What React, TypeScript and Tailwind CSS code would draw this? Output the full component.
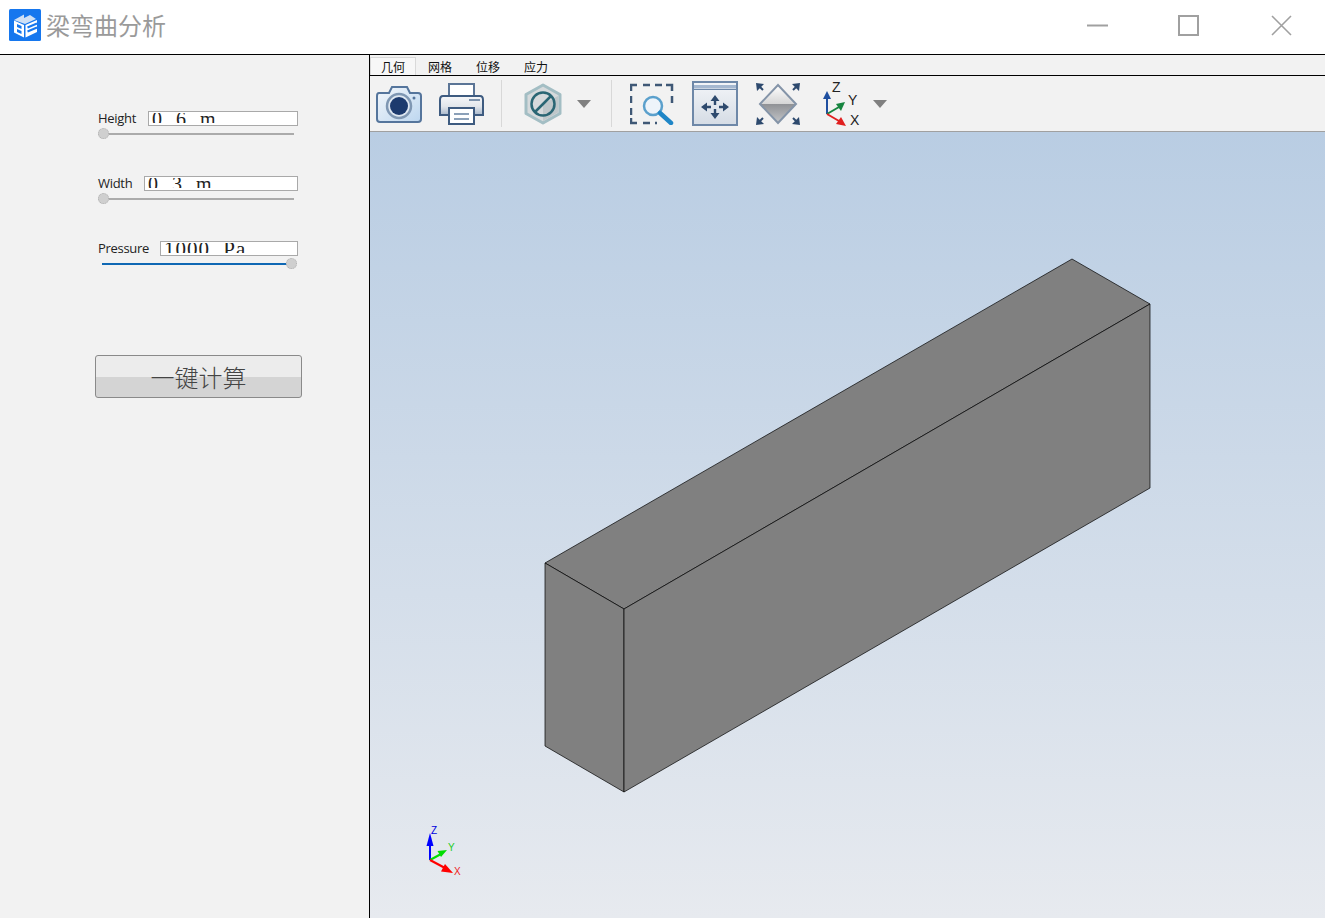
import React from "react";

const CJK = "font-['Noto_Sans_CJK_SC','Noto_Sans',sans-serif]";

function Logo() {
  return (
    <svg width="32" height="32" viewBox="0 0 32 32" className="shrink-0">
      <rect width="32" height="32" rx="1.5" fill="#1677ee" />
      <path d="M5 11 L15 5.5 L15 9 L21 6 L27 10 L16 15 Z" fill="#cfe0f5" />
      <path d="M5 11.5 L15 16 L15 28.5 L5 23.5 Z" fill="#ffffff" />
      <path d="M16.5 16 L28 11 L28 23 L16.5 28.5 Z" fill="#ffffff" />
      <path d="M8 15 L12.5 17 L12.5 20 L8 18 Z M8 20 L12.5 22 L12.5 25 L8 23 Z" fill="#1677ee" />
      <path d="M18.5 18.5 L28 14.5 M18.5 22.5 L28 18.5" stroke="#1677ee" strokeWidth="2" />
    </svg>
  );
}

function WindowButtons() {
  return (
    <div className="flex items-center gap-[70px] mr-[33px]">
      <svg width="21" height="21" viewBox="0 0 21 21">
        <path d="M0 10.5H21" stroke="#a0a0a0" strokeWidth="2" />
      </svg>
      <svg width="21" height="21" viewBox="0 0 21 21">
        <rect x="1" y="1" width="19" height="19" fill="none" stroke="#a0a0a0" strokeWidth="2" />
      </svg>
      <svg width="21" height="21" viewBox="0 0 21 21" className="ml-[2px]">
        <path d="M1 1L20 20M20 1L1 20" stroke="#a0a0a0" strokeWidth="1.6" />
      </svg>
    </div>
  );
}

function ValueRow({ label, value, inputWidth, textClass }: { label: string; value: string; inputWidth: string; textClass: string }) {
  return (
    <div className="flex items-center justify-between h-[15px] w-[200px]">
      <span className="text-[13px] leading-[15px] text-[#222] font-['Open_Sans',sans-serif] tracking-[-0.3px]">{label}</span>
      <div className={`${inputWidth} h-[15px] border border-[#a9a9a9] bg-white py-px pl-[3px]`}>
        <div className="h-[10px] overflow-hidden">
          <div className={`font-['Liberation_Serif',serif] text-[#222] whitespace-pre ${textClass}`}>{value}</div>
        </div>
      </div>
    </div>
  );
}

function Slider({ full }: { full?: boolean }) {
  return (
    <div className={`relative h-[11px] mt-[2px] ${full ? "ml-[4px] w-[195px]" : "w-[196px]"}`}>
      <div className={`absolute left-0 top-[5px] h-[2px] ${full ? "right-[6px] bg-[#0f68b4]" : "right-0 bg-[#ababab]"}`} />
      <div
        className={`absolute top-0 w-[11px] h-[11px] rounded-full bg-[#cfcfcf] border border-dotted border-[#b0b0b0] ${full ? "right-0" : "left-0"}`}
      />
    </div>
  );
}

function SidePanel() {
  return (
    <div className="w-[369px] shrink-0 bg-[#f2f2f2] flex flex-col pl-[98px] pt-[56px]">
      <ValueRow label="Height" value="0.6 m" inputWidth="w-[150px]" textClass="-mt-[4px] text-[20px] leading-[20px] tracking-[4.5px]" />
      <Slider />
      <div className="h-[37px]" />
      <ValueRow label="Width" value="0.3 m" inputWidth="w-[154px]" textClass="-mt-[4px] text-[20px] leading-[20px] tracking-[4.5px]" />
      <Slider />
      <div className="h-[37px]" />
      <ValueRow label="Pressure" value="1000 Pa" inputWidth="w-[138px]" textClass="-mt-[4px] text-[21px] leading-[21px] tracking-[1px] [word-spacing:7px]" />
      <Slider full />
      <button className="-ml-[3px] mt-[86px] w-[207px] h-[43px] rounded-[3px] border border-[#8a8a8a] bg-[linear-gradient(#ececec_0%,#ececec_50%,#d4d4d4_52%,#d4d4d4_100%)] font-['Noto_Sans_CJK_SC',sans-serif] font-light text-[24px] leading-[38px] text-[#444]">
        一键计算
      </button>
    </div>
  );
}

function Camera() {
  return (
    <svg width="46" height="40" viewBox="0 0 46 40">
      <defs>
        <linearGradient id="camBody" x1="0" y1="0" x2="1" y2="1">
          <stop offset="0" stopColor="#f4f7fb" />
          <stop offset="1" stopColor="#bcd6ef" />
        </linearGradient>
      </defs>
      <path d="M3 9 H13 L16 3 H31 L34 9 H42 Q45 9 45 12 V35 Q45 38 42 38 H4 Q1 38 1 35 V12 Q1 9 3 9 Z" fill="url(#camBody)" stroke="#55759c" strokeWidth="2" />
      <circle cx="23" cy="22" r="12" fill="#dfe8f2" stroke="#7f97b3" strokeWidth="2.5" />
      <circle cx="23" cy="22" r="9" fill="#1c3a6e" />
      <circle cx="38" cy="14" r="1.5" fill="#55759c" />
    </svg>
  );
}

function Printer() {
  return (
    <svg width="45" height="44" viewBox="0 0 45 44">
      <defs>
        <linearGradient id="printBody" x1="0" y1="0" x2="0" y2="1">
          <stop offset="0" stopColor="#f6f7f9" />
          <stop offset="0.55" stopColor="#e2e6eb" />
          <stop offset="1" stopColor="#a7b7ca" />
        </linearGradient>
      </defs>
      <path d="M10 2 H35 V15 H10 Z" fill="#fff" stroke="#5b7596" strokeWidth="2" />
      <path d="M4 14 H41 Q44 14 44 18 V33 H1 V18 Q1 14 4 14 Z" fill="url(#printBody)" stroke="#3e5b80" strokeWidth="2" />
      <path d="M30 18 H41" stroke="#7d93ad" strokeWidth="2" />
      <path d="M10 26 H35 V42 H10 Z" fill="#fff" stroke="#3e5b80" strokeWidth="2" />
      <path d="M15 32 H30 M15 37 H30" stroke="#8ba0b8" strokeWidth="2" />
    </svg>
  );
}

function Hexagon() {
  return (
    <svg width="38" height="42" viewBox="0 0 38 42">
      <path d="M19 2 L36 11.5 V30.5 L19 40 L2 30.5 V11.5 Z" fill="#d6dadc" stroke="#a3bec4" strokeWidth="3" strokeLinejoin="round" />
      <path d="M19 21 L34 13 V29.5 L19 38 Z" fill="#bfc7ca" />
      <circle cx="19" cy="21" r="11.5" fill="none" stroke="#2a6674" strokeWidth="2.5" />
      <path d="M11 29 L27 13" stroke="#2a6674" strokeWidth="2.5" />
    </svg>
  );
}

function Caret() {
  return (
    <svg width="14" height="8" viewBox="0 0 14 8">
      <path d="M0 0 H14 L7 8 Z" fill="#808080" />
    </svg>
  );
}

function ZoomBox() {
  return (
    <svg width="44" height="42" viewBox="0 0 44 42">
      <path d="M1 8 V2 H7 M13 2 H20 M25 2 H32 M36 2 H42 V8 M42 13 V20 M1 13 V20 M1 25 V32 M1 35 V40 H7 M13 40 H20 M25 40 H27" fill="none" stroke="#3f5876" strokeWidth="2.5" />
      <circle cx="23" cy="23" r="9" fill="#eef4fa" stroke="#5ba0cc" strokeWidth="2.5" />
      <path d="M30 30 L41 40" stroke="#1f86c7" strokeWidth="4.5" strokeLinecap="round" />
    </svg>
  );
}

function FitWindow() {
  return (
    <svg width="46" height="45" viewBox="0 0 46 45">
      <defs>
        <linearGradient id="fitBody" x1="0" y1="0" x2="0" y2="1">
          <stop offset="0" stopColor="#f3f5f8" />
          <stop offset="1" stopColor="#d5dce5" />
        </linearGradient>
      </defs>
      <rect x="1" y="1" width="44" height="43" fill="url(#fitBody)" stroke="#6e88a8" strokeWidth="2" />
      <rect x="2" y="4" width="42" height="3.5" fill="#a5b8d0" />
      <path d="M2 8.5 H44" stroke="#6e88a8" />
      <path d="M23 14 L27.5 20 H24.2 V24 H21.8 V20 H18.5 Z" fill="#2e4a6e" />
      <path d="M23 38 L18.5 32 H21.8 V28 H24.2 V32 H27.5 Z" fill="#2e4a6e" />
      <path d="M9 26 L15 21.5 V24.8 H19 V27.2 H15 V30.5 Z" fill="#2e4a6e" />
      <path d="M37 26 L31 21.5 V24.8 H27 V27.2 H31 V30.5 Z" fill="#2e4a6e" />
    </svg>
  );
}

function Diamond() {
  return (
    <svg width="46" height="44" viewBox="0 0 46 44">
      <defs>
        <linearGradient id="dTop" x1="0" y1="0" x2="0" y2="1">
          <stop offset="0" stopColor="#ffffff" />
          <stop offset="1" stopColor="#d5d5d5" />
        </linearGradient>
        <linearGradient id="dBottom" x1="0" y1="0" x2="0" y2="1">
          <stop offset="0" stopColor="#8f9195" />
          <stop offset="1" stopColor="#c4c6c9" />
        </linearGradient>
      </defs>
      <path d="M23 3 L41 22 H5 Z" fill="url(#dTop)" />
      <path d="M5 22 H41 L23 41 Z" fill="url(#dBottom)" />
      <path d="M23 3 L41 22 L23 41 L5 22 Z" fill="none" stroke="#8494a8" strokeWidth="2" />
      <path d="M1 1 L9 2 L2 9 Z M45 1 L37 2 L44 9 Z M1 43 L2 35 L9 42 Z M45 43 L44 35 L37 42 Z" fill="#2e4a6e" />
      <path d="M3 3 L8 8 M43 3 L38 8 M3 41 L8 36 M43 41 L38 36" stroke="#2e4a6e" strokeWidth="2" />
    </svg>
  );
}

function AxesIcon() {
  return (
    <svg width="38" height="46" viewBox="0 0 38 46">
      <path d="M4 33 V14" stroke="#1f4fa0" strokeWidth="2" />
      <path d="M4 10 L8 18 H0 Z" fill="#1f4fa0" />
      <path d="M4 33 L16 26" stroke="#16853f" strokeWidth="2" />
      <path d="M22 21 L18 30 L13 23 Z" fill="#16853f" />
      <path d="M4 33 L16 40" stroke="#e02020" strokeWidth="2" />
      <path d="M23 45 L13 43 L18 36 Z" fill="#e02020" />
      <text x="9" y="11" fontSize="14" fill="#222" fontFamily="Liberation Sans, sans-serif">Z</text>
      <text x="25" y="24" fontSize="14" fill="#222" fontFamily="Liberation Sans, sans-serif">Y</text>
      <text x="27" y="44" fontSize="14" fill="#222" fontFamily="Liberation Sans, sans-serif">X</text>
    </svg>
  );
}

function Separator() {
  return <div className="w-px h-[47px] bg-[#d8d8d8]" />;
}

function Toolbar() {
  return (
    <div className="h-[57px] shrink-0 bg-[#f2f2f2] border-t border-black border-b border-b-[#a0a0a0] flex items-center pl-[6px]">
      <Camera />
      <div className="ml-[17px]"><Printer /></div>
      <div className="ml-[17px]"><Separator /></div>
      <div className="ml-[22px]"><Hexagon /></div>
      <div className="ml-[15px]"><Caret /></div>
      <div className="ml-[20px]"><Separator /></div>
      <div className="ml-[18px]"><ZoomBox /></div>
      <div className="ml-[18px]"><FitWindow /></div>
      <div className="ml-[17px]"><Diamond /></div>
      <div className="ml-[22px]"><AxesIcon /></div>
      <div className="ml-[12px]"><Caret /></div>
    </div>
  );
}

function Tabs() {
  const tabs = ["几何", "网格", "位移", "应力"];
  return (
    <div className={`h-[20px] shrink-0 bg-[#f2f2f2] flex pt-[2px] ${CJK}`}>
      {tabs.map((t, i) => (
        <div
          key={t}
          className={`h-[18px] text-center text-[12px] leading-[17px] text-[#111] ${
            i === 0 ? "w-[46px] bg-[#f7f7f7] border border-b-0 border-[#d9d9d9]" : "w-[48px] pt-px"
          }`}
        >
          {t}
        </div>
      ))}
    </div>
  );
}

function Viewport() {
  return (
    <div className="flex-1 bg-[linear-gradient(#b9cde3,#e7eaef)] overflow-hidden">
      <svg width="955" height="786" viewBox="370 132 955 786" className="block">
        <g stroke="#000" strokeWidth="0.7" strokeLinejoin="round" fill="#808080">
          <polygon points="545,563 1072,259 1150,304 624,609" />
          <polygon points="545,563 624,609 624,792 545,746" />
          <polygon points="624,609 1150,304 1150,488 624,792" />
        </g>
        <path d="M430 860 V842" stroke="#0000ff" strokeWidth="2" />
        <path d="M430 833 L433.5 846 H426.5 Z" fill="#0000ff" />
        <path d="M430 860 L441 854" stroke="#00dd00" strokeWidth="2" />
        <path d="M447 850 L441 857 L437.5 851 Z" fill="#00dd00" />
        <path d="M430 860 L445 868" stroke="#ff0000" strokeWidth="2" />
        <path d="M453 873 L441 871.5 L445 864 Z" fill="#ff0000" />
        <text x="431" y="834" fontSize="10" fill="#0000dd" fontFamily="Liberation Sans, sans-serif">Z</text>
        <text x="448" y="851" fontSize="10" fill="#22cc22" fontFamily="Liberation Sans, sans-serif">Y</text>
        <text x="454" y="875" fontSize="10" fill="#ee2222" fontFamily="Liberation Sans, sans-serif">X</text>
      </svg>
    </div>
  );
}

export default function App() {
  return (
    <div className="w-[1325px] h-[918px] flex flex-col overflow-hidden bg-white">
      <div className="h-[55px] shrink-0 bg-white border-b border-black flex items-center justify-between pl-[9px]">
        <div className="flex items-center gap-[5px] -mt-[4px]">
          <Logo />
          <span className={`${CJK} text-[24px] leading-[32px] text-[#9a9a9a]`}>梁弯曲分析</span>
        </div>
        <div className="-mt-[4px]"><WindowButtons /></div>
      </div>
      <div className="flex-1 flex min-h-0">
        <SidePanel />
        <div className="flex-1 flex flex-col border-l border-black min-w-0">
          <Tabs />
          <Toolbar />
          <Viewport />
        </div>
      </div>
    </div>
  );
}
